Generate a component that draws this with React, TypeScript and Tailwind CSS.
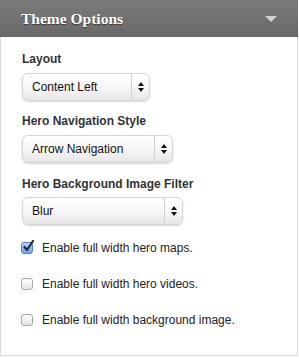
import React from "react";

function SelectBox({ value, width }: { value: string; width: string }) {
  return (
    <div
      className={`relative flex h-[28px] items-center rounded-[6px] border border-[#d6d6d6] bg-gradient-to-b from-[#ffffff] via-[#f7f7f7] to-[#e6e6e6] shadow-[0_1px_2px_rgba(0,0,0,0.15)] ${width}`}
    >
      <span className="flex-1 pl-[9px] text-[12px] text-[#111]">{value}</span>
      <div className="flex h-full w-[18px] items-center justify-center border-l border-[#d0d0d0]">
        <svg width="6" height="10" viewBox="0 0 6 10">
          <polygon points="3,0 6,4 0,4" fill="#111" />
          <polygon points="0,6 6,6 3,10" fill="#111" />
        </svg>
      </div>
    </div>
  );
}

function Check({ checked, label }: { checked?: boolean; label: string }) {
  return (
    <div className="ml-[-1px] flex h-[18px] items-center">
      {checked ? (
        <div className="relative h-[12px] w-[12px] rounded-[3px] border border-[#5a7fb5] bg-gradient-to-b from-[#b9d3f3] to-[#6f9ede]">
          <svg
            className="absolute left-[0px] top-[-3px]"
            width="13"
            height="13"
            viewBox="0 0 13 13"
          >
            <path
              d="M2.5 7 L5 10 L11 1"
              stroke="#1b2a44"
              strokeWidth="2.2"
              fill="none"
              strokeLinecap="round"
              strokeLinejoin="round"
            />
          </svg>
        </div>
      ) : (
        <div className="h-[12px] w-[12px] rounded-[3px] border border-[#a9a9a9] bg-gradient-to-b from-[#ffffff] to-[#e4e4e4]" />
      )}
      <span className="ml-[9px] text-[12px] text-[#222]">{label}</span>
    </div>
  );
}

export default function App() {
  return (
    <div
      className="w-[298px] bg-white"
      style={{ fontFamily: '"Liberation Sans", Arial, sans-serif' }}
    >
      <div className="flex h-[37px] items-center justify-between bg-gradient-to-b from-[#7b7b7b] to-[#686868] pl-[21px] pr-[21px]">
        <span
          className="text-[15.5px] font-bold text-white [text-shadow:0_1px_1px_rgba(0,0,0,0.5)]"
          style={{ fontFamily: '"Liberation Serif", "Times New Roman", serif' }}
        >
          Theme Options
        </span>
        <svg width="12" height="6" viewBox="0 0 12 6">
          <polygon points="0,0 12,0 6,6" fill="#d2d2d2" />
        </svg>
      </div>
      <div className="h-[319px] border-x border-b border-[#d9d9d9] pl-[21px] pt-[15px]">
        <div className="text-[12px] font-bold leading-[15px] text-[#333]">Layout</div>
        <div className="mt-[6px]">
          <SelectBox value="Content Left" width="w-[128px]" />
        </div>
        <div className="mt-[13px] text-[12px] font-bold leading-[15px] text-[#333]">
          Hero Navigation Style
        </div>
        <div className="mt-[6px]">
          <SelectBox value="Arrow Navigation" width="w-[151px]" />
        </div>
        <div className="mt-[14px] text-[12px] font-bold leading-[15px] text-[#333]">
          Hero Background Image Filter
        </div>
        <div className="mt-[5px]">
          <SelectBox value="Blur" width="w-[161px]" />
        </div>
        <div className="mt-[14px] flex flex-col gap-[18px]">
          <Check checked label="Enable full width hero maps." />
          <Check label="Enable full width hero videos." />
          <Check label="Enable full width background image." />
        </div>
      </div>
    </div>
  );
}
